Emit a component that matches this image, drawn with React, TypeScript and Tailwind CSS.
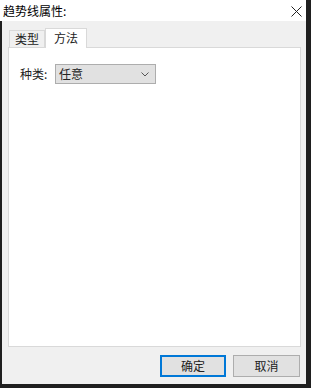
import React from 'react';

const font = { fontFamily: '"Noto Sans CJK SC", "Microsoft YaHei", sans-serif' };

const App: React.FC = () => {
  return (
    <div className="w-[311px] h-[388px] bg-[#1f1f1f] overflow-hidden text-[12px] text-[#000]" style={font}>
      {/* Title bar */}
      <div className="w-[306px] h-[21px] bg-white flex items-center justify-between pl-[3px] pr-[4px]">
        <span className="text-[12px] leading-none">趋势线属性:</span>
        <svg width="11" height="11" viewBox="0 0 11 11" className="mt-[1px]">
          <path d="M0.5 0.5 L10.5 10.5 M10.5 0.5 L0.5 10.5" stroke="#222" strokeWidth="1" />
        </svg>
      </div>

      {/* Body */}
      <div className="ml-[2px] w-[304px] h-[363px] bg-[#f0f0f0] flex flex-col pl-[6px] pt-[7px]">
        {/* Tabs */}
        <div className="flex items-end h-[19px] relative z-10">
          <div className="w-[36px] h-[17px] ml-[1px] border border-b-0 border-[#d9d9d9] bg-[#f0f0f0] flex items-center justify-center leading-none text-[#222]">
            类型
          </div>
          <div className="w-[42px] h-[20px] -mb-[1px] border border-b-0 border-[#d9d9d9] bg-white flex items-start justify-center pt-[3px] leading-none text-[#222]">
            方法
          </div>
        </div>

        {/* Panel */}
        <div className="w-[293px] h-[300px] bg-white border border-[#d9d9d9]">
          <div className="flex items-center mt-[16px] ml-[11px]">
            <span className="w-[35px] leading-none text-[#222]">种类:</span>
            <div className="w-[101px] h-[20px] bg-[#e1e1e1] border border-[#adadad] flex items-center justify-between pl-[3px] pr-[6px]">
              <span className="leading-none text-[#222]">任意</span>
              <svg width="8" height="5" viewBox="0 0 8 5">
                <path d="M0.5 0.5 L4 4 L7.5 0.5" stroke="#555" strokeWidth="1" fill="none" />
              </svg>
            </div>
          </div>
        </div>

        {/* Buttons */}
        <div className="flex gap-[7px] mt-[8px] ml-[152px]">
          <button className="w-[66px] h-[22px] bg-[#e1e1e1] border-2 border-[#0078d7] flex items-center justify-center leading-none text-[12px] text-[#222]">
            确定
          </button>
          <button className="w-[67px] h-[22px] bg-[#e1e1e1] border border-[#adadad] flex items-center justify-center leading-none text-[12px] text-[#222]">
            取消
          </button>
        </div>
      </div>
    </div>
  );
};

export default App;
